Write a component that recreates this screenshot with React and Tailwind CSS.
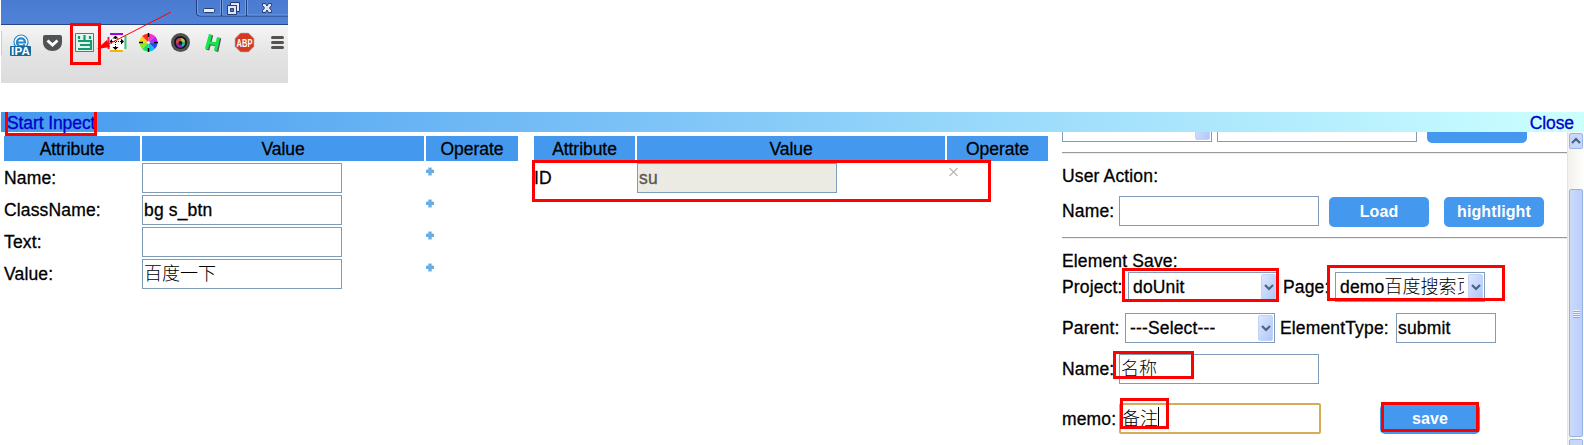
import React from "react";

const INPUT = "h-[30px] border border-[#7f9db9] bg-white px-px flex items-center whitespace-nowrap overflow-hidden shrink-0";

function Field({ className = "w-[200px]", children }) {
  return <div className={`${INPUT} ${className}`}>{children}</div>;
}

function Chevron({ up = false }) {
  return (
    <svg width="10" height="8" viewBox="0 0 10 8" fill="none" stroke="#4d6185" strokeWidth="2.2">
      <path d={up ? "M1 6l4-4 4 4" : "M1 2l4 4 4-4"} />
    </svg>
  );
}

function Select({ children, textClass = "" }) {
  return (
    <div className="flex h-[30px] w-[150px] shrink-0 items-center justify-between border border-[#7f9db9] bg-white pl-1 pr-px">
      <span className={`flex items-center overflow-hidden whitespace-nowrap ${textClass}`}>{children}</span>
      <span className="flex h-[26px] w-[15px] shrink-0 items-center justify-center rounded-[2px] border border-[#c3d3f8] bg-linear-to-br from-[#dce7ff] to-[#afc7f8]">
        <Chevron />
      </span>
    </div>
  );
}

function Button({ children, className = "" }) {
  return (
    <div className={`flex h-[30px] w-[100px] shrink-0 items-center justify-center rounded-[5px] bg-[#4499ee] text-[16px] font-bold tracking-[0.1px] text-white [-webkit-text-stroke:0px] ${className}`}>
      {children}
    </div>
  );
}

function Head({ className, children }) {
  return <div className={`flex h-[25px] items-center justify-center bg-[#4499ee] pt-px tracking-[-0.05px] ${className}`}>{children}</div>;
}

function Plus() {
  return (
    <svg className="mt-[4px]" width="8" height="9" viewBox="0 0 8 9">
      <path d="M2 0h4v2h2v4H6v3H2V6H0V2h2z" fill="#c4dff4" />
      <path d="M2.500 1h3v2H8v3H5.500v2h-3V6H0V3h2.500z" fill="#69aee2" />
    </svg>
  );
}

function Rule() {
  return <div className="h-[2px] w-[505px] border-t border-[#999] bg-[#eee]" />;
}

const cjk = "text-[18px] font-light tracking-[0px] [-webkit-text-stroke:0px]";

function Toolbar() {
  return (
    <div className="ml-px h-[83px] w-[287px]">
      <div className="flex h-[25px] items-start justify-end border-b border-[#27478a] bg-linear-to-b from-[#4a7bd0] to-[#5083d8]">
        <svg width="92" height="17" viewBox="0 0 92 17" fill="none">
          <path d="M.5 0v13q0 3 3 3H92M25.500 0v16M50.500 0v16" stroke="#253f7c" />
          <path d="M1.500 0v12q0 3 3 3h20V0M26.500 0v15h23V0M51.500 0v15H92" stroke="#729be0" />
          <rect x="7.500" y="8.500" width="11" height="4" rx="1" fill="#e9effa" stroke="#263d71" />
          <path d="M34.500 2.500h9v9h-9z" fill="#dce6f8" stroke="#263d71" />
          <path d="M37 5h4v4h-4z" fill="#4b78c6" />
          <path d="M31.500 5.500h9v9h-9z" fill="#dce6f8" stroke="#263d71" />
          <path d="M34.500 8.500h3v3h-3z" fill="#4b78c6" stroke="#263d71" />
          <path d="M66.500 3.500h3l1.500 2.500 1.500-2.500h3v2l-2 2.500 2 2.500v2h-3L71 10l-1.500 2.500h-3v-2l2-2.500-2-2.500z" fill="#dce6f8" stroke="#263d71" />
        </svg>
      </div>
      <div className="flex h-[58px] items-start bg-linear-to-b from-[#f6f6f6] via-[#e4e4e4] to-[#dcdcdc]">
        <svg width="287" height="40" viewBox="1 25 287 40">
          <path d="M1.500 31v24" stroke="#ccc" />
          {/* IPA reader */}
          <circle cx="21" cy="42" r="7" fill="#fff" stroke="#2489cf" strokeWidth="1.200" />
          <path d="M17 42.500h8c0-5.500-8-5.500-8 0 0 4 5 5 8 2" fill="none" stroke="#2489cf" strokeWidth="2.200" />
          <rect x="10" y="46" width="21" height="10" rx="1" fill="#17699c" />
          <text x="20.500" y="55" textAnchor="middle" textLength="19" lengthAdjust="spacingAndGlyphs" fill="#fff" fontSize="11" fontWeight="bold" fontFamily="Liberation Sans, sans-serif">IPA</text>
          {/* Pocket */}
          <path d="M45 35h15q2 0 2 2v5c0 12-19 12-19 0v-5q0-2 2-2z" fill="#515256" />
          <path d="M47.500 40.500l5 4.500 5-4.500" fill="none" stroke="#fff" strokeWidth="3" />
          {/* doUnit */}
          <path d="M75.500 33.500h18v18h-18z" fill="#e4f5ee" stroke="#159b6f" />
          <path d="M84.500 35v6M79 36v3M90 36v3M78 41h13v8H78M80 45h11" fill="none" stroke="#159b6f" strokeWidth="2.200" />
          {/* Resizer */}
          <path d="M110 37h14v13h-14z" fill="#fff" />
          <path d="M110 34h13" stroke="#a500e5" strokeWidth="2" />
          <path d="M110 51h13" stroke="#f5b400" strokeWidth="2" />
          <path d="M108.500 37v12" stroke="#f02050" strokeWidth="2" />
          <path d="M125.500 36v13" stroke="#37c77f" strokeWidth="2" />
          <path d="M112 41.500h11M115.500 38v9" stroke="#111" strokeDasharray="1 1" />
          <path d="M112.500 38.500l3-3 3 3zM112.500 47l3 3 3-3zM121 38.500l3 3-3 3zM112 39l-2.500 2.500L112 44z" fill="#000" />
          {/* Color wheel */}
          <path d="M148.500 42.500V33.500a9 9 0 0 1 6.400 2.600z" fill="#ff30c8" />
          <path d="M148.500 42.500l6.400-6.400a9 9 0 0 1 2.600 6.400z" fill="#c020ff" />
          <path d="M148.500 42.500h9a9 9 0 0 1-2.600 6.400z" fill="#2449f5" />
          <path d="M148.500 42.500l6.400 6.400a9 9 0 0 1-6.400 2.600z" fill="#12b8f0" />
          <path d="M148.500 42.500v9a9 9 0 0 1-6.400-2.600z" fill="#14e06c" />
          <path d="M148.500 42.500l-6.400 6.400a9 9 0 0 1-2.600-6.400z" fill="#8cec18" />
          <path d="M148.500 42.500h-9a9 9 0 0 1 2.600-6.400z" fill="#ffcf12" />
          <path d="M148.500 42.500l-6.400-6.400a9 9 0 0 1 6.400-2.600z" fill="#ff2d22" />
          <path d="M148.500 33v4M148.500 48v4M139 42.500h4M154 42.500h4" stroke="#000" strokeWidth="1.500" />
          <circle cx="148.500" cy="42.500" r="1.200" fill="#fff" />
          {/* Lens */}
          <circle cx="180.500" cy="42.500" r="9.500" fill="#4e5154" />
          <circle cx="180.500" cy="42.500" r="7" fill="#151515" stroke="#777" strokeWidth=".6" />
          <circle cx="180.500" cy="42.500" r="4.800" fill="#164e93" />
          <path d="M176 43a4.500 4.500 0 0 1 5-5l-.5 5z" fill="#e04535" />
          <path d="M181 38a4.500 4.500 0 0 1 4 4.500l-4.500.5z" fill="#a6cf2c" />
          <path d="M176 43h5l2 4a4.500 4.500 0 0 1-7-4z" fill="#8d28b2" />
          <path d="M180.500 42.500l4.500.5a4.500 4.500 0 0 1-2.500 4z" fill="#16c2b4" />
          <circle cx="180.500" cy="43" r="2" fill="#131d2b" />
          {/* H mark */}
          <path d="M211.500 35l-4 15M219.500 38l-3 13.500M209.500 43.500l8 1" stroke="#555" strokeWidth="3.600" fill="none" />
          <path d="M210.500 34.500l-4 14.500M218.500 37.500l-3 13M208.500 42.500l8.500 1.500" stroke="#10e84c" strokeWidth="3.200" fill="none" />
          {/* Adblock */}
          <path d="M240.500 33h8l5.500 5.500v8l-5.500 5.500h-8l-5.500-5.500v-8z" fill="#d43a1d" stroke="#b6b6b6" strokeWidth=".6" />
          <text x="244.500" y="46.500" textAnchor="middle" textLength="16" lengthAdjust="spacingAndGlyphs" fill="#fff" fontSize="11" fontWeight="bold" fontFamily="Liberation Sans, sans-serif">ABP</text>
          <path d="M272.500 37.500h10M272.500 42.500h10M272.500 47.500h10" stroke="#56524f" strokeWidth="3" strokeLinecap="round" />
        </svg>
      </div>
    </div>
  );
}

function Outline({ className }) {
  return <div className={`pointer-events-none absolute border-[3px] border-[#ff0000] ${className}`} />;
}

const rows = [
  ["Name:", null],
  ["ClassName:", "bg s_btn"],
  ["Text:", null],
  ["Value:", <span className={cjk}>百度一下</span>],
];

export default function App() {
  return (
    <div className="relative h-[445px] w-[1584px] overflow-hidden bg-white font-['Liberation_Sans','Noto_Sans_CJK_SC',sans-serif] text-[17.5px] leading-5 tracking-[0.15px] text-black [-webkit-text-stroke:0.3px]">
      <Toolbar />

      <div className="ml-px mt-[29px] flex h-5 items-center justify-between bg-linear-to-r from-[#4499ee] to-[#ccffff] pl-[6px] pr-[10px] pt-[2px] tracking-[-0.1px] text-[#0000cc]">
        <span>Start Inpect</span>
        <span>Close</span>
      </div>

      <div className="flex h-[313px] items-start">
        <section className="ml-1 mt-1 w-[514px]">
          <div className="flex gap-[2px]">
            <Head className="w-[136px]">Attribute</Head>
            <Head className="w-[282px]">Value</Head>
            <Head className="w-[92px]">Operate</Head>
          </div>
          <div className="mt-[2px] flex flex-col gap-[2px]">
            {rows.map(([label, value]) => (
              <div key={label} className="flex h-[30px] items-start">
                <span className="w-[138px] pt-[5px]">{label}</span>
                <Field>{value}</Field>
                <span className="ml-[84px]"><Plus /></span>
              </div>
            ))}
          </div>
        </section>

        <section className="ml-4 mt-1 w-[514px]">
          <div className="flex gap-[2px]">
            <Head className="w-[101px]">Attribute</Head>
            <Head className="w-[308px]">Value</Head>
            <Head className="w-[101px]">Operate</Head>
          </div>
          <div className="mt-[2px] flex h-[30px] items-start">
            <span className="w-[103px] pt-[5px]">ID</span>
            <Field className="w-[200px] !bg-[#ebebe4] text-[#555]">su</Field>
            <svg className="ml-[112px] mt-[5px]" width="9" height="8" viewBox="0 0 9 8" fill="none">
              <path d="M.5 0l8 8M8.500 0l-8 8" stroke="#bbb" strokeWidth="1.400" />
            </svg>
          </div>
        </section>

        <section className="ml-[14px] h-[313px] w-[505px] overflow-hidden">
          <div className="flex h-[10px] items-end">
            <Select />
            <Field className="ml-[5px] w-[200px]" />
            <Button className="ml-[10px] translate-y-px" />
          </div>
          <div className="mt-[10px]"><Rule /></div>
          <div className="mt-[12px]">User Action:</div>
          <div className="mt-[10px] flex items-center">
            <span className="w-[57px]">Name:</span>
            <Field />
            <Button className="ml-[10px] translate-y-px">Load</Button>
            <Button className="ml-[15px] translate-y-px">hightlight</Button>
          </div>
          <div className="mt-[11px]"><Rule /></div>
          <div className="mt-[12px]">Element Save:</div>
          <div className="mt-px flex items-center">
            <span className="w-[66px] whitespace-nowrap">Project:</span>
            <Select>doUnit</Select>
            <span className="ml-[5px] w-[52px]">Page:</span>
            <Select textClass="w-[124px]">demo<span className={cjk}>百度搜索页</span></Select>
          </div>
          <div className="mt-[11px] flex items-center">
            <span className="w-[63px]">Parent:</span>
            <Select>---Select---</Select>
            <span className="ml-[5px] w-[116px] whitespace-nowrap">ElementType:</span>
            <Field className="w-[100px]">submit</Field>
          </div>
          <div className="mt-[11px] flex items-center">
            <span className="w-[57px]">Name:</span>
            <Field><span className={cjk}>名称</span></Field>
          </div>
          <div className="mt-[19px] flex items-center">
            <span className="w-[57px]">memo:</span>
            <div className="flex h-[31px] w-[202px] items-center rounded-[2px] border-2 border-[#d7ac58] px-px">
              <span className={cjk}>备注</span>
              <span className="mb-[3px] h-5 w-px bg-black" />
            </div>
            <Button className="ml-[59px] mt-px">save</Button>
          </div>
        </section>

        <div className="flex h-[313px] w-[17px] flex-col items-center border-l border-[#e4e4df] bg-linear-to-r from-[#f2f1ec] to-[#fefefb]">
          <div className="mt-px flex h-[16px] w-[14px] shrink-0 items-center justify-center rounded-[2px] border border-[#9bb5e8] bg-[#c6d7fc]"><Chevron up /></div>
          <div className="mt-[40px] flex h-[248px] w-[14px] shrink-0 flex-col items-center justify-center gap-px rounded-[2px] border border-[#98b1e4] bg-linear-to-r from-[#cbdafd] to-[#b9cefb]">
            {[0, 1, 2, 3].map((i) => <span key={i} className="h-px w-[7px] bg-[#edf4ff] shadow-[0_1px_0_#8caae6]" />)}
          </div>
          <div className="mt-[2px] h-[16px] w-[14px] shrink-0 rounded-[2px] border border-[#9bb5e8] bg-[#c6d7fc]" />
        </div>
      </div>

      <Outline className="left-[70px] top-[23px] h-[42px] w-[31px]" />
      <Outline className="left-[5px] top-[112px] h-[24px] w-[92px] border-t-0" />
      <Outline className="left-[532px] top-[160px] h-[42px] w-[459px]" />
      <Outline className="left-[1122px] top-[268px] h-[34px] w-[157px]" />
      <Outline className="left-[1327px] top-[265px] h-[36px] w-[178px]" />
      <Outline className="left-[1113px] top-[351px] h-[28px] w-[81px]" />
      <Outline className="left-[1120px] top-[398px] h-[31px] w-[49px]" />
      <Outline className="left-[1381px] top-[402px] h-[30px] w-[98px]" />
      <svg className="pointer-events-none absolute left-[95px] top-[10px]" width="80" height="42" viewBox="95 10 80 42">
        <path d="M171 12L105 46" stroke="#f00" strokeWidth="1" />
        <path d="M97 49l10-9 3 7z" fill="#f00" />
      </svg>
    </div>
  );
}
